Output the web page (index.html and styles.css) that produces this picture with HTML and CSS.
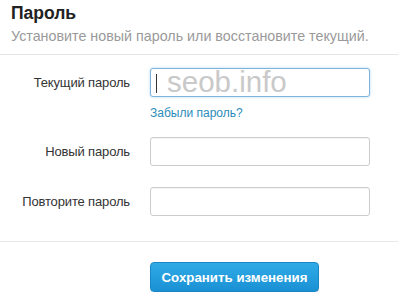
FILE: index.html
```html
<!DOCTYPE html>
<html lang="ru">
<head>
<meta charset="utf-8">
<link rel="stylesheet" href="styles.css">
</head>
<body>
<div class="page">
  <div class="header">
    <h1 class="title">Пароль</h1>
    <p class="subtitle">Установите новый пароль или восстановите текущий.</p>
  </div>
  <div class="form">
    <div class="row">
      <label class="label">Текущий пароль</label>
      <div class="control">
        <div class="field focused"><span class="caret"></span><span class="watermark">seob.info</span></div>
        <a class="link" href="#">Забыли пароль?</a>
      </div>
    </div>
    <div class="row row-new">
      <label class="label">Новый пароль</label>
      <div class="control"><div class="field"></div></div>
    </div>
    <div class="row row-repeat">
      <label class="label">Повторите пароль</label>
      <div class="control"><div class="field"></div></div>
    </div>
  </div>
  <div class="actions">
    <button class="btn">Сохранить изменения</button>
  </div>
</div>
</body>
</html>
```
FILE: styles.css
```css
html, body {
  margin: 0;
  padding: 0;
  background: #fff;
}
body {
  font-family: Arial, "Liberation Sans", sans-serif;
  color: #333;
}
.page {
  width: 398px;
}
.header {
  padding: 3px 11px 0;
  border-bottom: 1px solid #e5e5e5;
  height: 55px;
  box-sizing: border-box;
}
.title {
  margin: 0;
  font-size: 17.5px;
  line-height: 21px;
  font-weight: bold;
  color: #222;
}
.subtitle {
  margin: 4px 0 0;
  font-size: 14.3px;
  line-height: 16px;
  color: #9a9a9a;
}
.form {
  display: flex;
  flex-direction: column;
  padding-top: 13px;
  border-bottom: 1px solid #e8e8e8;
  padding-bottom: 25px;
}
.row {
  display: grid;
  grid-template-columns: 130px 220px;
  column-gap: 20px;
  align-items: start;
}
.row-new {
  margin-top: 16px;
}
.row-repeat {
  margin-top: 21px;
}
.label {
  text-align: right;
  font-size: 13px;
  letter-spacing: -0.15px;
  line-height: 29px;
  color: #333;
}
.control {
  display: flex;
  flex-direction: column;
}
.field {
  position: relative;
  height: 27px;
  border: 1px solid #ccc;
  border-radius: 3px;
  background: #fff;
  box-shadow: inset 0 1px 1px rgba(0,0,0,0.04);
}
.field.focused {
  border-color: #7fb3d9;
  box-shadow: 0 0 3px rgba(82,168,236,0.45);
}
.caret {
  position: absolute;
  left: 5px;
  top: 5px;
  width: 1px;
  height: 19px;
  background: #333;
}
.watermark {
  position: absolute;
  left: 16px;
  top: -3px;
  font-size: 29.5px;
  line-height: 32px;
  color: #c9c9c9;
}
.link {
  margin-top: 8px;
  font-size: 12px;
  line-height: 16px;
  color: #2a8cba;
  text-decoration: none;
}
.actions {
  padding: 20px 0 0 150px;
}
.btn {
  width: 169px;
  height: 30px;
  border: 1px solid #1a86c4;
  border-radius: 4px;
  background: linear-gradient(#2fabe6, #1a90d4);
  color: #fff;
  font-family: Arial, "Liberation Sans", sans-serif;
  font-weight: bold;
  font-size: 13.3px;
  padding: 0;
  box-shadow: 0 1px 1px rgba(0,0,0,0.15);
}
```
